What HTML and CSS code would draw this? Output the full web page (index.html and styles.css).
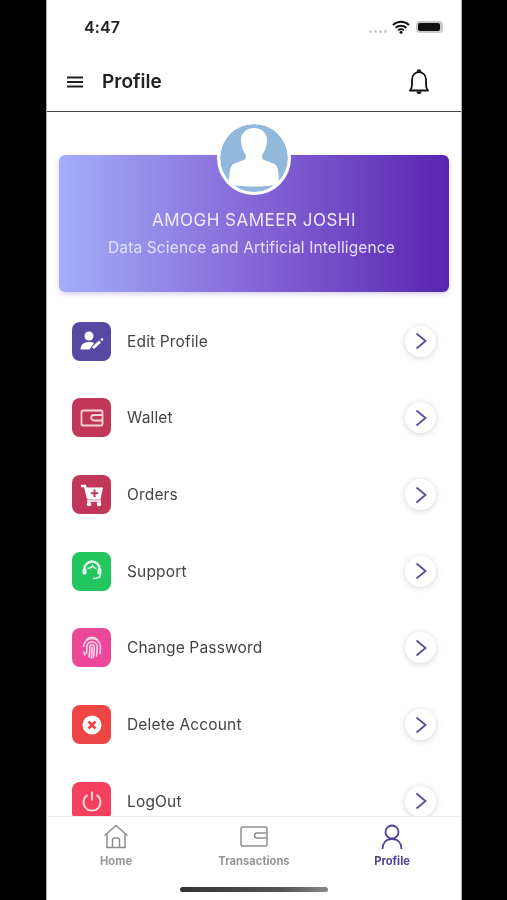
FILE: index.html
```html
<!DOCTYPE html>
<html lang="en">
<head>
<meta charset="utf-8">
<title>Profile</title>
<link rel="stylesheet" href="styles.css">
</head>
<body>
<div class="phone">
  <div class="status">
    <span class="time">4:47</span>
    <div class="status-icons">
      <span class="dots"><i></i><i></i><i></i><i></i></span>
      <svg class="wifi" width="18" height="14" viewBox="0 0 18 14"><path d="M1 5a11.500 11.500 0 0 1 16 0M3.600 7.800a7.800 7.800 0 0 1 10.800 0M6.200 10.300a4 4 0 0 1 5.600 0" fill="none" stroke="#111" stroke-width="2"/><circle cx="9" cy="12.300" r="1.500" fill="#111"/></svg>
      <span class="battery"><i></i></span>
    </div>
  </div>
  <header class="topbar">
    <svg class="menu" width="16" height="12" viewBox="0 0 16 12"><path d="M0 1.500h16M0 6h16M0 10.500h16" stroke="#222" stroke-width="2"/></svg>
    <h1>Profile</h1>
    <svg class="bell" width="22" height="28" viewBox="0 0 22 28"><path d="M2 22.500c1.500-1.500 2-3 2-6v-5c0-4 3-7.500 7-7.500s7 3.500 7 7.500v5c0 3 .5 4.500 2 6z" fill="none" stroke="#111" stroke-width="1.800" stroke-linejoin="round"/><path d="M9.500 3.500a1.500 1.500 0 0 1 3 0" fill="none" stroke="#111" stroke-width="1.600"/><path d="M8.500 23.500a2.500 2.500 0 0 0 5 0z" fill="#111"/></svg>
  </header>
  <main class="content">
    <div class="avatar">
      <svg width="68" height="68" viewBox="0 0 68 68"><circle cx="34" cy="34" r="34" fill="#92b9dc"/><path d="M34 4c-8 0-13 5-13 12 0 6 2 11 4.500 14.500 1 2 .5 4.500-2 5.500-4 2-10 3-12 6-2 3-2.500 12-2.500 18.500 8 1.500 17 2 25 2s17-.5 25-2c0-6.500-.5-15.500-2.500-18.500-2-3-8-4-12-6-2.500-1-3-3.500-2-5.500C45 27 47 22 47 16c0-7-5-12-13-12z" fill="#fff"/></svg>
    </div>
    <section class="card">
      <div class="name">AMOGH SAMEER JOSHI</div>
      <div class="dept">Data Science and Artificial Intelligence</div>
    </section>
    <ul class="list">
      <li class="row">
        <span class="tile tile-indigo"><svg width="26" height="24" viewBox="0 0 26 24"><circle cx="10" cy="7" r="4.500" fill="#fff"/><path d="M1.500 20.500c0-4.500 3-7.500 8.500-7.500 2 0 3.500.3 5 1l-4.500 6.500z" fill="#fff"/><path d="M14 19l7-6.500" stroke="#fff" stroke-width="3"/><circle cx="23" cy="10.500" r="1.300" fill="#fff"/></svg></span>
        <span class="label">Edit Profile</span>
        <span class="go"><svg width="12" height="18" viewBox="0 0 12 18"><path d="M1.500 1.500L10.500 9l-9 7.500" fill="none" stroke="#5b4aa0" stroke-width="1.800"/></svg></span>
      </li>
      <li class="row">
        <span class="tile tile-crimson"><svg width="24" height="18" viewBox="0 0 24 18"><rect x="1.500" y="1.500" width="21" height="15" rx="1.500" fill="none" stroke="#fbd5dc" stroke-width="1.800"/><path d="M22 6h-8a2 2 0 0 0 0 5.500h8" fill="none" stroke="#fbd5dc" stroke-width="1.800"/></svg></span>
        <span class="label">Wallet</span>
        <span class="go"><svg width="12" height="18" viewBox="0 0 12 18"><path d="M1.500 1.500L10.500 9l-9 7.500" fill="none" stroke="#5b4aa0" stroke-width="1.800"/></svg></span>
      </li>
      <li class="row">
        <span class="tile tile-crimson"><svg width="24" height="24" viewBox="0 0 24 24"><path d="M1 3h4l3 12h12" fill="none" stroke="#fff" stroke-width="2.400"/><path d="M5.500 4.500h17.500l-2.500 12H8z" fill="#fff"/><path d="M14.500 6.500v7.500M10.800 10.200h7.400" stroke="#c2365a" stroke-width="2"/><path d="M7 18h14" stroke="#fff" stroke-width="1.600"/><circle cx="9" cy="21" r="2.300" fill="#fff"/><circle cx="19" cy="21" r="2.300" fill="#fff"/></svg></span>
        <span class="label">Orders</span>
        <span class="go"><svg width="12" height="18" viewBox="0 0 12 18"><path d="M1.500 1.500L10.500 9l-9 7.500" fill="none" stroke="#5b4aa0" stroke-width="1.800"/></svg></span>
      </li>
      <li class="row">
        <span class="tile tile-green"><svg width="22" height="24" viewBox="0 0 22 24"><path d="M3.500 13V10a7.500 7.500 0 0 1 15 0v3" fill="none" stroke="#e5fbee" stroke-width="2.400"/><path d="M6.500 9.500c2.500 0 4-1 5-3 1 2 2 3 4 3" fill="none" stroke="#e5fbee" stroke-width="1.500"/><path d="M19.500 15.500c0 3-2.500 4-7.500 4" fill="none" stroke="#e5fbee" stroke-width="1.500"/><rect x="1.500" y="9.500" width="4" height="6" rx="1.500" fill="#e5fbee"/><rect x="16.500" y="9.500" width="4" height="6" rx="1.500" fill="#e5fbee"/></svg></span>
        <span class="label">Support</span>
        <span class="go"><svg width="12" height="18" viewBox="0 0 12 18"><path d="M1.500 1.500L10.500 9l-9 7.500" fill="none" stroke="#5b4aa0" stroke-width="1.800"/></svg></span>
      </li>
      <li class="row">
        <span class="tile tile-pink"><svg width="20" height="24" viewBox="0 0 20 24"><g fill="none" stroke="#fbdcec" stroke-width="1.500"><path d="M4 4a8 8 0 0 1 12 0"/><path d="M1.500 11a8.500 8.500 0 0 1 17 0c0 3 0 5-.5 7"/><path d="M2 15.500c.3 1.500.5 2.500 1 4"/><path d="M4.500 18c.3-2 .3-5 .3-7a5.200 5.200 0 0 1 10.400 0c0 4 0 7-1 9.500"/><path d="M7 21.500c.5-3 .8-6 .8-10.500a2.200 2.200 0 0 1 4.400 0c0 4 0 8-1 11"/><path d="M10 11c0 4 0 7-.8 11.500"/></g></svg></span>
        <span class="label">Change Password</span>
        <span class="go"><svg width="12" height="18" viewBox="0 0 12 18"><path d="M1.500 1.500L10.500 9l-9 7.500" fill="none" stroke="#5b4aa0" stroke-width="1.800"/></svg></span>
      </li>
      <li class="row">
        <span class="tile tile-red"><svg width="20" height="20" viewBox="0 0 20 20"><circle cx="10" cy="10" r="9.500" fill="#fff"/><path d="M6.500 6.500l7 7M13.500 6.500l-7 7" stroke="#ef4444" stroke-width="2.600"/></svg></span>
        <span class="label">Delete Account</span>
        <span class="go"><svg width="12" height="18" viewBox="0 0 12 18"><path d="M1.500 1.500L10.500 9l-9 7.500" fill="none" stroke="#5b4aa0" stroke-width="1.800"/></svg></span>
      </li>
      <li class="row">
        <span class="tile tile-rose"><svg width="20" height="22" viewBox="0 0 20 22"><path d="M5.500 5a8.500 8.500 0 1 0 9 0" fill="none" stroke="#fde0e6" stroke-width="1.800"/><path d="M10 1.500v9" stroke="#fde0e6" stroke-width="1.800"/></svg></span>
        <span class="label">LogOut</span>
        <span class="go"><svg width="12" height="18" viewBox="0 0 12 18"><path d="M1.500 1.500L10.500 9l-9 7.500" fill="none" stroke="#5b4aa0" stroke-width="1.800"/></svg></span>
      </li>
    </ul>
  </main>
  <nav class="tabs">
    <div class="tab">
      <svg width="26" height="26" viewBox="0 0 26 26"><path d="M1.500 11.500L13 1.500l11.500 10" fill="none" stroke="#8e8e8e" stroke-width="1.500"/><path d="M4 10v13.500h18V10M9.500 23.500V16a2 2 0 0 1 2-2h3a2 2 0 0 1 2 2v7.500" fill="none" stroke="#8e8e8e" stroke-width="1.500"/></svg>
      <span>Home</span>
    </div>
    <div class="tab">
      <svg width="28" height="22" viewBox="0 0 28 22"><rect x="1" y="1" width="26" height="19" rx="1.500" fill="none" stroke="#8e8e8e" stroke-width="1.500"/><path d="M27 7h-10a2 2 0 0 0 0 5h10" fill="none" stroke="#8e8e8e" stroke-width="1.500"/></svg>
      <span>Transactions</span>
    </div>
    <div class="tab tab-active">
      <svg width="22" height="26" viewBox="0 0 22 26"><circle cx="11" cy="8" r="6.500" fill="none" stroke="#4f4296" stroke-width="1.800"/><path d="M1.500 25c0-6 3.500-10 9.500-10s9.500 4 9.500 10" fill="none" stroke="#4f4296" stroke-width="1.800"/></svg>
      <span>Profile</span>
    </div>
    <div class="home-bar"></div>
  </nav>
</div>
</body>
</html>
```

FILE: styles.css
```css
* { box-sizing: border-box; }
html, body { margin: 0; height: 100%; }
body {
  background: #000;
  padding-left: 46px;
  font-family: "Inter", "Liberation Sans", sans-serif;
  overflow: hidden;
}
.phone {
  width: 416px;
  height: 900px;
  background: #fff;
  border-left: 1px solid #aaa;
  border-right: 1px solid #aaa;
  display: flex;
  flex-direction: column;
  filter: blur(0.45px);
}
.status {
  height: 50px;
  flex: none;
  display: flex;
  align-items: flex-end;
  justify-content: space-between;
  padding: 0 18px 13px 37px;
}
.time { font-size: 16px; font-weight: 600; color: #222; line-height: 20px; letter-spacing: .1px; }
.status-icons { display: flex; align-items: center; gap: 5px; padding-bottom: 3px; }
.dots { display: flex; gap: 2px; margin-top: 9px; }
.dots i { width: 3px; height: 3px; border-radius: 50%; background: #c9c9c9; }
.battery {
  width: 27px; height: 12px; border-radius: 4px; background: #c9c9c9; padding: 2px; display: block; margin-left: 1px;
}
.battery i { display: block; height: 100%; width: 22px; background: #111; border-radius: 2px; }
.topbar {
  height: 62px;
  flex: none;
  border-bottom: 1px solid #444;
  display: flex;
  align-items: center;
  padding: 2px 31px 0 19px;
}
.menu { margin-left: 1px; }
.topbar h1 { margin: 0 0 0 19px; font-size: 19px; font-weight: 600; color: #222; flex: 1; }
.content { flex: 1; min-height: 0; overflow: hidden; padding: 9px 12px 0; }
.avatar {
  width: 74px; height: 74px; margin: 0 auto -40px; border: 3px solid #fff; border-radius: 50%;
  background: #fff; position: relative; z-index: 1; overflow: hidden;
}
.avatar svg { display: block; }
.card {
  height: 137px;
  border-radius: 6px;
  background: linear-gradient(90deg, #a3aefa 0%, #8a72dc 42%, #5a24b0 100%);
  box-shadow: 0 2px 5px rgba(90,60,180,.25);
  text-align: center;
  padding-top: 54px;
}
.name { font-size: 17px; line-height: 22px; font-weight: 400; letter-spacing: .5px; color: #eeeafc; }
.dept { font-size: 15.500px; line-height: 20px; margin-top: 7px; padding-right: 5px; letter-spacing: .14px; color: #e4e0fb; }
.list { list-style: none; margin: 11px 0 0; padding: 0 13px; }
.row { height: 76.670px; display: flex; align-items: center; }
.tile {
  width: 39px; height: 39px; border-radius: 8px; flex: none;
  display: flex; align-items: center; justify-content: center;
}
.tile-indigo { background: #5748a4; }
.tile-crimson { background: #c2365a; }
.tile-green { background: #22c55e; }
.tile-pink { background: #ec4899; }
.tile-red { background: #ef4444; }
.tile-rose { background: #f43f5e; }
.label { margin-left: 16px; flex: 1; font-size: 15.500px; color: #444; letter-spacing: .16px; }
.go {
  width: 31px; height: 31px; border-radius: 50%; background: #fff; flex: none;
  box-shadow: 0 1px 6px rgba(0,0,0,.18);
  display: flex; align-items: center; justify-content: center; padding-left: 1px;
}
.tabs {
  height: 84px;
  flex: none;
  background: #fff;
  border-top: 1px solid #eee;
  display: grid;
  grid-template-columns: repeat(3, 1fr);
  grid-template-rows: 54px 1fr;
  position: relative;
}
.tab { display: flex; flex-direction: column; align-items: center; justify-content: flex-start; padding-top: 7px; gap: 4px; color: #969696; font-size: 11.200px; font-weight: 700; }
.tab svg { height: 26px; flex: none; }
.tab-active { color: #4f4296; }
.home-bar { grid-column: 1 / 4; justify-self: center; width: 148px; height: 5px; margin-top: 16px; border-radius: 3px; background: linear-gradient(90deg, #333, #555 70%, #888); }
```
